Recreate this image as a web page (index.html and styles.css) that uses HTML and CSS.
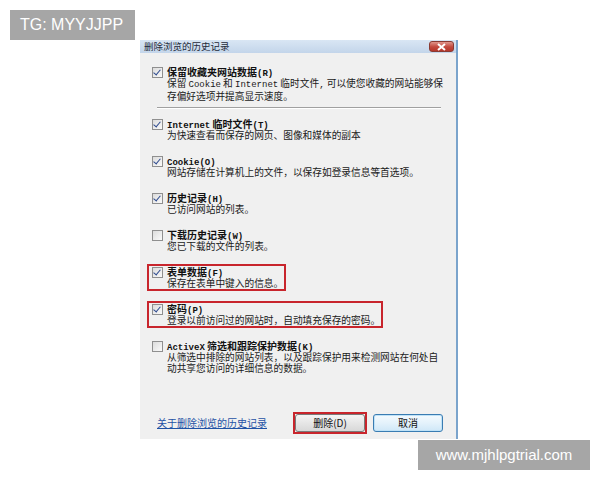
FILE: index.html
```html
<!DOCTYPE html>
<html lang="zh-CN">
<head>
<meta charset="utf-8">
<link rel="stylesheet" href="styles.css">
</head>
<body>
<div class="stage">
  <div class="dialog">
    <div class="titlebar">
      <span class="title">删除浏览的历史记录</span>
      <span class="close"><svg width="11" height="8" viewBox="0 0 11 8"><path d="M2 1 L9 7 M9 1 L2 7" stroke="#fff" stroke-width="2"/></svg></span>
    </div>
    <div class="content">
      <div class="item">
        <span class="cb on"></span>
        <span class="t">保留收藏夹网站数据<span class="lat">(R)</span></span>
        <span class="d two">保留 <span class="lat">Cookie</span> 和 <span class="lat">Internet</span> 临时文件<span class="lat">,</span> 可以使您收藏的网站能够保<br>存偏好选项并提高显示速度。</span>
      </div>
      <div class="sep"></div>
      <div class="list">
        <div class="item">
          <span class="cb on"></span>
          <span class="t"><span class="lat">Internet</span> 临时文件<span class="lat">(T)</span></span>
          <span class="d">为快速查看而保存的网页、图像和媒体的副本</span>
        </div>
        <div class="item">
          <span class="cb on"></span>
          <span class="t"><span class="lat">Cookie(O)</span></span>
          <span class="d">网站存储在计算机上的文件，以保存如登录信息等首选项。</span>
        </div>
        <div class="item">
          <span class="cb on"></span>
          <span class="t">历史记录<span class="lat">(H)</span></span>
          <span class="d">已访问网站的列表。</span>
        </div>
        <div class="item">
          <span class="cb"></span>
          <span class="t">下载历史记录<span class="lat">(W)</span></span>
          <span class="d">您已下载的文件的列表。</span>
        </div>
        <div class="item mark">
          <span class="cb on"></span>
          <span class="t">表单数据<span class="lat">(F)</span></span>
          <span class="d">保存在表单中键入的信息。</span>
        </div>
        <div class="item mark">
          <span class="cb on"></span>
          <span class="t">密码<span class="lat">(P)</span></span>
          <span class="d">登录以前访问过的网站时，自动填充保存的密码。</span>
        </div>
        <div class="item">
          <span class="cb"></span>
          <span class="t"><span class="lat">ActiveX</span> 筛选和跟踪保护数据<span class="lat">(K)</span></span>
          <span class="d two">从筛选中排除的网站列表，以及跟踪保护用来检测网站在何处自<br>动共享您访问的详细信息的数据。</span>
        </div>
      </div>
    </div>
    <div class="footer">
      <a class="link" href="#">关于删除浏览的历史记录</a>
      <div class="buttons">
        <span class="mark-wrap"><button class="btn">删除(D)</button></span>
        <button class="btn default">取消</button>
      </div>
    </div>
  </div>
</div>
<div class="wm wm-tl">TG: MYYJJPP</div>
<div class="wm wm-br">www.mjhlpgtrial.com</div>
</body>
</html>
```
FILE: styles.css
```css
html, body {
  margin: 0;
  padding: 0;
  background: #fff;
}
body {
  position: relative;
  width: 600px;
  height: 480px;
  overflow: hidden;
  font-family: "Noto Sans CJK SC", sans-serif;
}
.stage {
  padding: 40px 0 0 140px;
}
.dialog {
  width: 318px;
  height: 399px;
  box-sizing: border-box;
  display: flex;
  flex-direction: column;
  background: #f0f0f0;
  border-right: 2px solid #7ba4cc;
}
.titlebar {
  height: 13px;
  display: flex;
  align-items: center;
  justify-content: space-between;
  padding-left: 4px;
  background: linear-gradient(#d9e6f4, #c3d5ea);
}
.title {
  font-size: 9.5px;
  line-height: 13px;
  color: #1e2a3a;
}
.close {
  width: 25px;
  height: 11px;
  margin-right: 2px;
  box-sizing: border-box;
  display: flex;
  align-items: center;
  justify-content: center;
  border: 1px solid #8a3a32;
  border-radius: 3px;
  background: linear-gradient(#e0958c, #c2483d 55%, #b5372c);
}
.content {
  padding: 13px 0 0 12px;
}
.item {
  display: grid;
  grid-template-columns: 11px auto;
  grid-template-rows: 12px auto;
  column-gap: 4px;
  width: fit-content;
  color: #111;
}
.list .item + .item {
  margin-top: 14px;
}
.cb {
  grid-row: 1;
  grid-column: 1;
  width: 11px;
  height: 11px;
  margin-top: 1px;
  box-sizing: border-box;
  border: 1px solid #8f8f8f;
  background: linear-gradient(135deg, #dcdcdc, #fafafa);
  position: relative;
}
.cb.on::after {
  content: "";
  position: absolute;
  left: 2px;
  top: 0px;
  width: 3px;
  height: 6px;
  border-right: 1.5px solid #2d4a8e;
  border-bottom: 1.5px solid #2d4a8e;
  transform: rotate(40deg);
}
.t {
  grid-row: 1;
  grid-column: 2;
  display: block;
  height: 12px;
  font-size: 10px;
  line-height: 12px;
  font-weight: bold;
  white-space: nowrap;
}
.d {
  grid-row: 2;
  grid-column: 2;
  display: block;
  height: 11px;
  font-size: 9.7px;
  line-height: 11px;
  white-space: nowrap;
  color: #1a1a1a;
}
.d.two {
  height: 22px;
}
.lat {
  font-family: "Liberation Mono", monospace;
  font-size: 9px;
}
.t .lat {
  font-weight: bold;
}
.sep {
  height: 1px;
  margin: 7px 15px 9px 5px;
  background: #a0a0a0;
  border-bottom: 1px solid #fff;
}
.mark {
  outline: 2px solid #c8252c;
  padding-left: 3px;
  margin-left: -3px;
  padding-right: 1px;
}
.footer {
  margin-top: auto;
  display: flex;
  align-items: center;
  padding: 0 13px 7px 17px;
}
.link {
  font-size: 10px;
  line-height: 12px;
  color: #1f52a5;
  text-decoration: underline;
}
.buttons {
  margin-left: auto;
  display: flex;
  gap: 8px;
}
.mark-wrap {
  display: flex;
  outline: 2px solid #c8252c;
}
.btn {
  width: 70px;
  height: 18px;
  padding: 0;
  box-sizing: border-box;
  font-family: "Noto Sans CJK SC", sans-serif;
  font-size: 10px;
  line-height: 16px;
  color: #111;
  border: 1px solid #7a7a7a;
  border-radius: 3px;
  background: linear-gradient(#f4f4f4, #e6e6e6 50%, #d8d8d8);
}
.default {
  border-color: #3a7cb2;
  background: linear-gradient(#f4fafe, #e4f2fb 50%, #cfe7f7);
  box-shadow: inset 0 0 0 1px #bfe2f7;
}
.wm {
  position: absolute;
  background: #a6a6a6;
  color: #fff;
  font-family: "Liberation Sans", Arial, sans-serif;
}
.wm-tl {
  left: 10px;
  top: 10px;
  width: 125px;
  height: 30px;
  font-size: 16px;
  line-height: 30px;
  padding-left: 10px;
  box-sizing: border-box;
}
.wm-br {
  left: 418px;
  top: 440px;
  width: 172px;
  height: 30px;
  font-size: 15px;
  line-height: 30px;
  text-align: center;
}
```
